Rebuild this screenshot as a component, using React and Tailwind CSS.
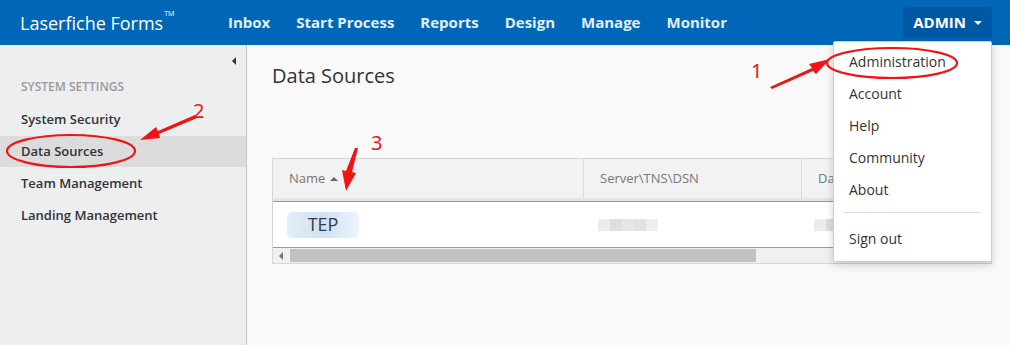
import React from 'react';

const navItems = ['Inbox', 'Start Process', 'Reports', 'Design', 'Manage', 'Monitor'];
const sideItems = ['System Security', 'Data Sources', 'Team Management', 'Landing Management'];
const menuItems = ['Administration', 'Account', 'Help', 'Community', 'About'];

const Header = () => (
    <div className="h-[45px] bg-[#0067b8] flex items-center">
        <div className="pl-[20px] w-[215px] text-white text-[18px] leading-none relative">
            Laserfiche Forms<span className="text-[7px] align-top relative top-[-4px] ml-[1px]">TM</span>
        </div>
        <nav className="flex">
            {navItems.map(item => (
                <span key={item} className="px-[13px] text-[15px] font-bold text-[#e3edf7]">{item}</span>
            ))}
        </nav>
        <div className="ml-auto mr-[18px] h-[31px] px-[10px] rounded-[3px] bg-[#0057a3] flex items-center gap-[8px] text-white text-[15px] font-bold">
            ADMIN
            <span className="w-0 h-0 border-l-[4px] border-r-[4px] border-t-[4px] border-l-transparent border-r-transparent border-t-white" />
        </div>
    </div>
);

const Sidebar = () => (
    <div className="w-[247px] bg-[#edeef0] border-r border-[#c4c4c4] flex flex-col">
        <div className="h-[32px] flex justify-end items-center pr-[10px]">
            <span className="w-0 h-0 border-t-[4px] border-b-[4px] border-r-[4px] border-t-transparent border-b-transparent border-r-[#333]" />
        </div>
        <div className="pl-[21px] text-[12px] font-semibold text-[#9a9a9a] h-[20px] flex items-center">SYSTEM SETTINGS</div>
        <div className="h-[7px]" />
        {sideItems.map(item => (
            <div
                key={item}
                className={`h-[31px] pl-[21px] flex items-center text-[13px] font-semibold text-[#333] mb-[1px] ${item === 'Data Sources' ? 'bg-[#dcdcdc]' : ''}`}
            >
                {item}
            </div>
        ))}
    </div>
);

const Blur = () => (
    <div className="flex">
        <span className="w-[12px] h-[12px] bg-[#ececec]" />
        <span className="w-[12px] h-[12px] bg-[#dedede]" />
        <span className="w-[12px] h-[12px] bg-[#e6e6e6]" />
        <span className="w-[12px] h-[12px] bg-[#e2e2e2]" />
        <span className="w-[12px] h-[12px] bg-[#eeeeee]" />
    </div>
);

const Main = () => (
    <div className="flex-1 bg-[#f9f9f9] pl-[25px] pr-[18px]">
        <div className="flex items-start h-[113px]">
            <h2 className="mt-[16px] text-[20px] text-[#333] font-normal">Data Sources</h2>
            <div className="ml-auto mt-[13px] w-[60px] h-[31px] rounded-[3px] bg-[#1d7a5c]" />
        </div>
        <div className="border border-[#d6d6d6] bg-white">
            <div className="h-[42px] bg-[#f2f2f2] flex text-[13px] text-[#777] border-b-[3px] border-[#e4e4e4]">
                <div className="w-[311px] pl-[16px] flex items-center border-r border-[#dcdcdc] gap-[5px]">
                    Name
                    <span className="w-0 h-0 border-l-[4px] border-r-[4px] border-b-[4px] border-l-transparent border-r-transparent border-b-[#666]" />
                </div>
                <div className="w-[218px] pl-[16px] flex items-center border-r border-[#dcdcdc]">Server\TNS\DSN</div>
                <div className="flex-1 pl-[16px] flex items-center">Database</div>
            </div>
            <div className="h-[47px] border-t border-b border-[#5aa8e3] flex items-center">
                <div className="w-[311px] pl-[14px]">
                    <div className="w-[72px] h-[26px] rounded-[5px] bg-gradient-to-r from-[#e3eef9] via-[#cfe2f4] to-[#eef4fb] flex items-center justify-center text-[18px] text-[#3a3a3a]">
                        TEP
                    </div>
                </div>
                <div className="w-[218px] pl-[14px]">
                    <Blur />
                </div>
                <div className="flex-1 pl-[12px]">
                    <Blur />
                </div>
            </div>
            <div className="h-[15px] bg-[#f0f0f0] flex items-center">
                <span className="ml-[6px] w-0 h-0 border-t-[4px] border-b-[4px] border-r-[4px] border-t-transparent border-b-transparent border-r-[#777]" />
                <div className="ml-[7px] w-[466px] h-[13px] bg-[#c1c1c1]" />
            </div>
        </div>
    </div>
);

const Dropdown = () => (
    <div className="absolute left-[833px] top-[41px] w-[159px] h-[221px] bg-white border border-[#cfcfcf] rounded-[2px] shadow-[0_3px_8px_rgba(0,0,0,0.18)] pt-[4px]">
        {menuItems.map(item => (
            <div key={item} className="h-[32px] pl-[15px] flex items-center text-[14px] leading-none text-[#333]">{item}</div>
        ))}
        <div className="mx-[10px] mt-[6px] border-t border-[#dcdcdc]" />
        <div className="h-[32px] mt-[10px] pl-[15px] flex items-center text-[14px] leading-none text-[#333]">Sign out</div>
    </div>
);

const Annotations = () => (
    <svg className="absolute inset-0 pointer-events-none" width="1010" height="345">
        <g fill="none" stroke="#f01414" strokeWidth="2.2">
            <ellipse cx="892" cy="63" rx="65" ry="15" />
            <ellipse cx="71" cy="151" rx="64" ry="16" />
        </g>
        <g fill="#f01414">
            <polygon points="770,87 812,68 809,64 830,59 816,74 813,71 772,89" />
            <polygon points="195,115 158,131 156,127 140,140 160,138 159,134 197,118" />
            <polygon points="358,148 352,172 356,173 346,191 342,170 346,171 355,148" />
        </g>
        <g fill="#f01414" fontFamily="'Noto Sans', sans-serif" fontSize="20">
            <text x="751" y="78">1</text>
            <text x="193" y="118">2</text>
            <text x="371" y="150">3</text>
        </g>
    </svg>
);

const App = () => (
    <div className="w-[1010px] h-[345px] relative overflow-hidden font-['Open_Sans',sans-serif]">
        <Header />
        <div className="flex h-[300px]">
            <Sidebar />
            <Main />
        </div>
        <Dropdown />
        <Annotations />
    </div>
);

export default App;
